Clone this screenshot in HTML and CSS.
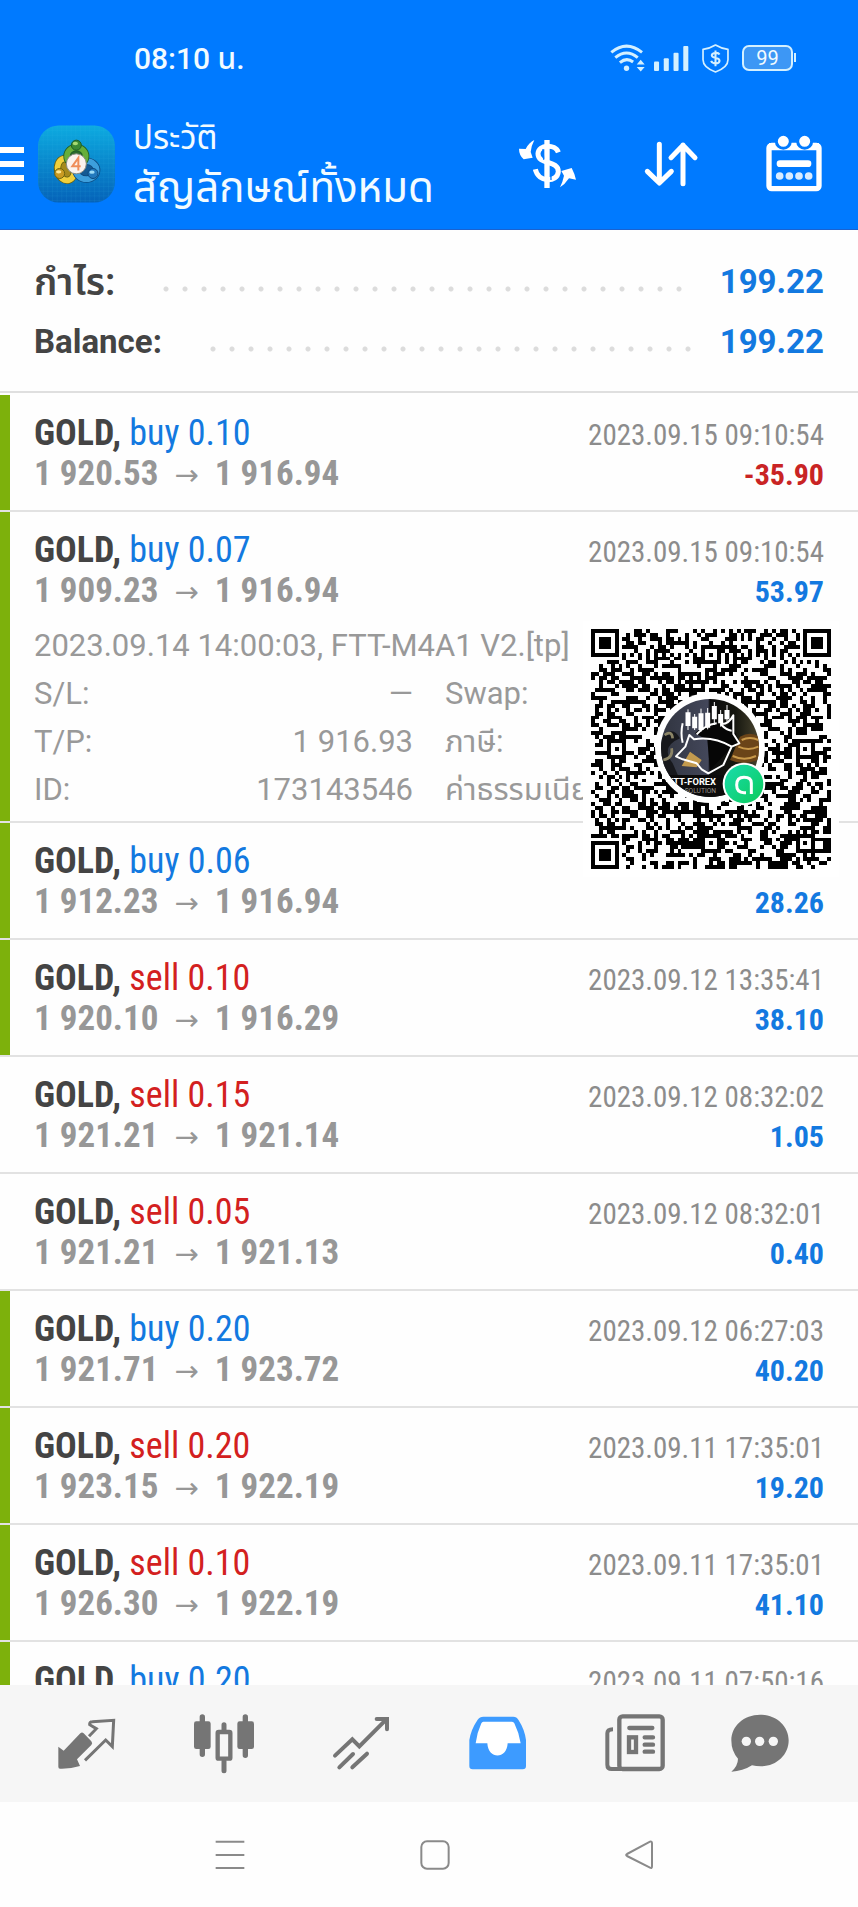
FILE: index.html
```html
<!DOCTYPE html>
<html lang="th">
<head>
    <meta charset="UTF-8">
    <meta name="viewport" content="width=device-width, initial-scale=1.0">
    <title>ประวัติ</title>
    <link rel="stylesheet" href="styles.css">
</head>
<body>
    <header class="header">
        <div class="status-bar">
            <span class="time">08:10 น.</span>
            <div class="status-icons">
                <svg class="wifi" viewBox="0 0 106 84" fill="none" stroke="#d4f0ff" stroke-width="9">
                    <path d="M4 25Q50 -13 97 25"/>
                    <path d="M16 41Q50 13 84 41"/>
                    <path d="M30 56Q50 39 70 54"/>
                    <circle cx="50" cy="73" r="8" fill="#d4f0ff" stroke="none"/>
                    <path d="M81 62l12-15 12 15zM81 69l12 14 12-14z" fill="#d4f0ff" stroke="none"/>
                </svg>
                <svg class="signal" viewBox="0 0 104 74" fill="#d4f0ff">
                    <rect x="0" y="46" width="15" height="28" rx="3"/>
                    <rect x="29" y="36" width="15" height="38" rx="3"/>
                    <rect x="58" y="20" width="15" height="54" rx="3"/>
                    <rect x="87" y="0" width="15" height="74" rx="3"/>
                </svg>
                <svg class="shield" viewBox="0 0 80 86" fill="none" stroke="#d4f0ff" stroke-width="5">
                    <path d="M40 3C53 11 64 14 77 16V47C77 66 60 76 40 83C20 76 3 66 3 47V16C16 14 27 11 40 3z" stroke-linejoin="round"/>
                    <path d="M52 31C48 24 30 25 29 33C29 44 52 38 52 50C51 60 31 60 27 50M40 19V66" stroke-width="6"/>
                </svg>
                <span class="battery">99</span>
            </div>
        </div>
        <div class="toolbar">
            <button class="menu" type="button" aria-label="Menu"><i></i><i></i><i></i></button>
            <svg class="logo" viewBox="0 0 231 231">
                <defs>
                    <linearGradient id="logoBg" x1="0" y1="0" x2="0" y2="1">
                        <stop offset="0" stop-color="#0dabe0"/>
                        <stop offset="1" stop-color="#0562b8"/>
                    </linearGradient>
                    <pattern id="mesh" width="14" height="14" patternUnits="userSpaceOnUse">
                        <path d="M14 0H0V14" fill="none" stroke="#38bdf0" stroke-opacity=".25" stroke-width="2"/>
                    </pattern>
                </defs>
                <rect width="231" height="231" rx="62" fill="url(#logoBg)"/>
                <rect width="231" height="231" rx="62" fill="url(#mesh)"/>
                <ellipse cx="84" cy="132" rx="25" ry="33" transform="rotate(-14 84 132)" fill="#a58a1c" stroke="#6b6310" stroke-width="22"/>
                <ellipse cx="84" cy="132" rx="25" ry="33" transform="rotate(-14 84 132)" fill="none" stroke="#f0cf3c" stroke-width="17"/>
                <ellipse cx="145" cy="134" rx="31" ry="27" fill="#145a94" stroke="#0c4a80" stroke-width="22"/>
                <ellipse cx="145" cy="134" rx="31" ry="27" fill="none" stroke="#3d9fdc" stroke-width="17"/>
                <ellipse cx="115" cy="92" rx="28" ry="26" fill="#2b6b2c" stroke="#1f5d26" stroke-width="22"/>
                <ellipse cx="115" cy="92" rx="28" ry="26" fill="none" stroke="#66ae3a" stroke-width="17"/>
                <circle cx="115" cy="59" r="15" fill="#3b8a35" stroke="#1f5d26" stroke-width="3"/>
                <ellipse cx="112" cy="54" rx="8" ry="5" fill="#a7d973"/>
                <circle cx="65" cy="144" r="15" fill="#c99a22" stroke="#6b6310" stroke-width="3"/>
                <ellipse cx="62" cy="139" rx="8" ry="5" fill="#ffe994"/>
                <circle cx="165" cy="144" r="15" fill="#2379bd" stroke="#0c4a80" stroke-width="3"/>
                <ellipse cx="162" cy="140" rx="8" ry="5" fill="#9ddcf7"/>
                <circle cx="115" cy="115" r="30" fill="#fbf3ee" stroke="#8a8c84" stroke-width="3"/>
                <path d="M121 135V97L103 122H128" fill="none" stroke="#ef8e5a" stroke-width="6"/>
            </svg>
            <div class="titles">
                <p class="subtitle">ประวัติ</p>
                <h1>สัญลักษณ์ทั้งหมด</h1>
            </div>
            <div class="actions">
                <button type="button" aria-label="Currency">
                    <svg class="icon" viewBox="0 0 180 180" fill="none" stroke="#fff" stroke-width="15">
                        <path d="M121 55C112 29 61 31 60 59C60 94 121 77 121 113C118 146 61 147 52 106"/>
                        <path d="M87 18V162" stroke-width="16"/>
                        <path d="M75 45L77 77M98 99L99 138" stroke="#007aff" stroke-width="4"/>
                        <path d="M49 18Q33 25 23 45L3 44Q3 63 17 76L44 71L38 54Q39 37 49 18z" fill="#fff" stroke="none"/>
                        <path d="M126 160Q141 151 153 133L174 137Q170 119 161 102L130 111L138 125Q134 144 126 160z" fill="#fff" stroke="none"/>
                    </svg>
                </button>
                <button type="button" aria-label="Sort">
                    <svg class="icon" viewBox="0 0 180 180" fill="none" stroke="#fff" stroke-width="15" stroke-linecap="round" stroke-linejoin="round">
                        <path d="M55 31V146M19 112L55 147L91 112"/>
                        <path d="M126 149V33M90 71L126 34L162 71"/>
                    </svg>
                </button>
                <button type="button" aria-label="Calendar">
                    <svg class="icon" viewBox="0 0 180 180" fill="none" stroke="#fff">
                        <rect x="15" y="34" width="150" height="130" rx="8" stroke-width="16"/>
                        <path d="M15 38H165" stroke-width="22"/>
                        <circle cx="58" cy="22" r="21" fill="#fff" stroke="#007aff" stroke-width="9"/>
                        <circle cx="122" cy="22" r="21" fill="#fff" stroke="#007aff" stroke-width="9"/>
                        <path d="M48 89H132" stroke-width="20" stroke-linecap="round"/>
                        <path d="M47 126H136" stroke="#d9ecff" stroke-width="23" stroke-linecap="round" stroke-dasharray="0 29"/>
                    </svg>
                </button>
            </div>
        </div>
    </header>

    <main class="history">
        <dl class="summary">
            <div><dt class="thai">กำไร:</dt><dd class="dots"></dd><dd class="sum">199.22</dd></div>
            <div><dt>Balance:</dt><dd class="dots"></dd><dd class="sum">199.22</dd></div>
        </dl>
        <ul class="deals">
            <li class="deal tp">
                <div class="row"><span class="symbol">GOLD, <span class="buy">buy 0.10</span></span><time>2023.09.15 09:10:54</time></div>
                <div class="row"><span class="price">1 920.53 <span class="arrow">→</span> 1 916.94</span><span class="profit loss">-35.90</span></div>
            </li>
            <li class="deal tp open">
                <div class="row"><span class="symbol">GOLD, <span class="buy">buy 0.07</span></span><time>2023.09.15 09:10:54</time></div>
                <div class="row"><span class="price">1 909.23 <span class="arrow">→</span> 1 916.94</span><span class="profit">53.97</span></div>
                <div class="details">
                    <p class="comment">2023.09.14 14:00:03, FTT-M4A1 V2.[tp]</p>
                    <p><span>S/L:</span><span>—</span></p>
                    <p><span>Swap:</span></p>
                    <p><span>T/P:</span><span>1 916.93</span></p>
                    <p><span>ภาษี:</span></p>
                    <p><span>ID:</span><span>173143546</span></p>
                    <p><span>ค่าธรรมเนียม:</span></p>
                </div>
                <div class="qr">
                    <svg viewBox="0 0 61 61" shape-rendering="crispEdges"><path id="qrModules"/></svg>
                    <svg class="avatar" viewBox="-117 -153 720 720">
                        <defs>
                            <clipPath id="face"><circle cx="240" cy="204" r="147"/></clipPath>
                            <linearGradient id="faceBg" x1="0" y1="0" x2="1" y2="0">
                                <stop offset="0" stop-color="#30343f"/>
                                <stop offset=".48" stop-color="#43475a"/>
                                <stop offset=".5" stop-color="#0b0b0c"/>
                                <stop offset=".75" stop-color="#15160f"/>
                                <stop offset="1" stop-color="#4a4530"/>
                            </linearGradient>
                            <linearGradient id="badge" x1="0" y1="0" x2="1" y2="1">
                                <stop offset="0" stop-color="#19dcae"/>
                                <stop offset="1" stop-color="#0ccb5b"/>
                            </linearGradient>
                        </defs>
                        <circle cx="240" cy="204" r="165" fill="#fff"/>
                        <g clip-path="url(#face)">
                            <rect x="90" y="50" width="300" height="310" fill="url(#faceBg)"/>
                            <path d="M92 180Q125 130 150 175Q90 200 128 250L150 300L90 290z" fill="#17181c"/>
                            <path d="M104 165Q125 150 128 175M100 240Q130 235 125 205" fill="none" stroke="#8b8466" stroke-width="8"/>
                            <path d="M180 215L215 240L200 262L155 258z" fill="#c29a4e"/>
                            <path d="M330 170Q365 150 392 175V235Q345 260 300 240z" fill="#6b4418"/>
                            <path d="M335 180q25 -12 50 0M325 200q30 14 60 0M308 228q35 16 70 0" fill="none" stroke="#c9994a" stroke-width="6"/>
                            <rect x="90" y="285" width="300" height="80" fill="#0c0b0b"/>
                            <path d="M195 160Q240 115 290 140L315 105L312 150L330 190L302 205L240 270L232 180z" fill="#060606"/>
                            <path d="M174 88V150M194 102V150M213 86V155M233 84V148M253 66V135M272 90V140M291 75V125" stroke="#fff" stroke-width="3"/>
                            <path d="M174 97V138M194 110V145M213 100V150M233 98V143M253 78V118M272 102V130M291 90V118" stroke="#fff" stroke-width="15"/>
                            <path d="M158 130Q151 160 158 188M178 165L166 200L138 229L158 238L200 250L215 268L235 280L280 255L305 200Q250 168 192 178zM305 200L328 190L310 162V106Q295 135 272 132M272 132Q288 150 305 152M200 163Q225 135 260 130" fill="none" stroke="#fff" stroke-width="6" stroke-linejoin="round"/>
                            <text x="114" y="316" class="face-name">FTT-FOREX</text>
                            <text x="164" y="338" class="face-sub">SOLUTION</text>
                        </g>
                        <circle cx="342" cy="312" r="64" fill="#fff"/>
                        <circle cx="342" cy="312" r="58" fill="url(#badge)"/>
                        <path d="M364 342V309Q364 292 342 292Q320 292 320 315Q320 338 342 338H348" fill="none" stroke="#fff" stroke-width="9"/>
                    </svg>
                </div>
            </li>
            <li class="deal tp">
                <div class="row"><span class="symbol">GOLD, <span class="buy">buy 0.06</span></span></div>
                <div class="row"><span class="price">1 912.23 <span class="arrow">→</span> 1 916.94</span><span class="profit">28.26</span></div>
            </li>
            <li class="deal tp">
                <div class="row"><span class="symbol">GOLD, <span class="sell">sell 0.10</span></span><time>2023.09.12 13:35:41</time></div>
                <div class="row"><span class="price">1 920.10 <span class="arrow">→</span> 1 916.29</span><span class="profit">38.10</span></div>
            </li>
            <li class="deal">
                <div class="row"><span class="symbol">GOLD, <span class="sell">sell 0.15</span></span><time>2023.09.12 08:32:02</time></div>
                <div class="row"><span class="price">1 921.21 <span class="arrow">→</span> 1 921.14</span><span class="profit">1.05</span></div>
            </li>
            <li class="deal">
                <div class="row"><span class="symbol">GOLD, <span class="sell">sell 0.05</span></span><time>2023.09.12 08:32:01</time></div>
                <div class="row"><span class="price">1 921.21 <span class="arrow">→</span> 1 921.13</span><span class="profit">0.40</span></div>
            </li>
            <li class="deal tp">
                <div class="row"><span class="symbol">GOLD, <span class="buy">buy 0.20</span></span><time>2023.09.12 06:27:03</time></div>
                <div class="row"><span class="price">1 921.71 <span class="arrow">→</span> 1 923.72</span><span class="profit">40.20</span></div>
            </li>
            <li class="deal tp">
                <div class="row"><span class="symbol">GOLD, <span class="sell">sell 0.20</span></span><time>2023.09.11 17:35:01</time></div>
                <div class="row"><span class="price">1 923.15 <span class="arrow">→</span> 1 922.19</span><span class="profit">19.20</span></div>
            </li>
            <li class="deal tp">
                <div class="row"><span class="symbol">GOLD, <span class="sell">sell 0.10</span></span><time>2023.09.11 17:35:01</time></div>
                <div class="row"><span class="price">1 926.30 <span class="arrow">→</span> 1 922.19</span><span class="profit">41.10</span></div>
            </li>
            <li class="deal tp">
                <div class="row"><span class="symbol">GOLD, <span class="buy">buy 0.20</span></span><time>2023.09.11 07:50:16</time></div>
            </li>
        </ul>
    </main>

    <nav class="tabs">
        <button type="button" aria-label="Quotes">
            <svg class="icon" viewBox="0 0 180 180" fill="none" stroke="#757575" stroke-width="9">
                <path d="M4 98L20 110L70 58Q75 53 80 58L103 82Q108 88 103 93L60 136L69 156Q40 165 9 164Q4 164 4 158z" fill="#757575" stroke="none"/>
                <path d="M96 67L118 44L98 32Q97 23 106 23L170 19L166 98L146 78L84 139" stroke-linejoin="miter"/>
            </svg>
        </button>
        <button type="button" aria-label="Chart">
            <svg class="icon" viewBox="0 0 180 180" fill="none" stroke="#757575">
                <path d="M25 9V121M154 9V124" stroke-width="16" stroke-linecap="round"/>
                <rect x="0" y="22" width="50" height="83" rx="7" fill="#757575" stroke="none"/>
                <rect x="130" y="22" width="50" height="83" rx="7" fill="#757575" stroke="none"/>
                <path d="M90 32V50M90 142V170" stroke-width="15" stroke-linecap="round"/>
                <rect x="71" y="54" width="38" height="80" stroke-width="13" rx="3"/>
            </svg>
        </button>
        <button type="button" aria-label="Trade">
            <svg class="icon" viewBox="0 0 180 180" fill="none" stroke="#757575" stroke-width="12" stroke-linecap="round">
                <path d="M12 125L64 76L85 97L166 16"/>
                <path d="M137 15H168V46"/>
                <path d="M25 160L66 120M64 160L108 119"/>
            </svg>
        </button>
        <button type="button" aria-label="History">
            <svg class="icon" viewBox="0 0 180 180">
                <path d="M46 8H136Q146 8 151 17Q170 46 174 78V156Q174 166 164 166H14Q4 166 4 156V78Q9 46 29 17Q35 8 46 8z" fill="#3d9bff"/>
                <path d="M46 23H132Q137 23 139 28Q153 56 158 88H119C117 137 60 137 58 88H23Q27 56 40 28Q42 23 46 23z" fill="#fff"/>
            </svg>
        </button>
        <button type="button" aria-label="News">
            <svg class="icon" viewBox="0 0 180 180" fill="none" stroke="#757575">
                <rect x="43" y="7" width="130" height="158" rx="10" stroke-width="13"/>
                <path d="M24 46Q7 46 7 58V152Q7 165 20 165H50" stroke-width="12"/>
                <path d="M73 42H142M119 70H144M119 92H144M119 113H144" stroke-width="13" stroke-linecap="round"/>
                <rect x="72" y="70" width="21" height="44" stroke-width="13"/>
            </svg>
        </button>
        <button type="button" aria-label="Chat">
            <svg class="icon" viewBox="0 0 180 180" fill="#757575">
                <path d="M90 2C139 2 176 36 176 79C176 123 139 157 93 157Q78 157 66 154Q38 172 4 173Q24 155 24 134Q4 112 4 79C4 36 42 2 90 2z"/>
                <circle cx="49" cy="82" r="14" fill="#f6f6f6"/>
                <circle cx="89" cy="82" r="14" fill="#f6f6f6"/>
                <circle cx="130" cy="82" r="14" fill="#f6f6f6"/>
            </svg>
        </button>
    </nav>

    <nav class="system-nav">
        <button type="button" aria-label="Recent">
            <svg viewBox="0 0 90 90" fill="none" stroke="#8a8a8a" stroke-width="6"><path d="M2 5H88M2 45H88M2 84H88"/></svg>
        </button>
        <button type="button" aria-label="Home">
            <svg viewBox="0 0 90 90" fill="none" stroke="#8a8a8a" stroke-width="6"><rect x="4" y="4" width="82" height="82" rx="17"/></svg>
        </button>
        <button type="button" aria-label="Back">
            <svg viewBox="0 0 90 90" fill="none" stroke="#8a8a8a" stroke-width="6"><path d="M6 42L75 5Q81 3 81 10V79Q81 86 75 83L6 48Q1 45 6 42z"/></svg>
        </button>
    </nav>
    <script src="qr.js"></script>
</body>
</html>
```
FILE: styles.css
```css
* {
    margin: 0;
    padding: 0;
    box-sizing: border-box;
}

body {
    display: flex;
    flex-direction: column;
    height: 100vh;
    overflow: hidden;
    font-family: Roboto, "Noto Sans Thai", "Noto Sans", sans-serif;
    font-size: 31px;
    color: #444;
    background-color: #fefefe;
}

button {
    display: flex;
    justify-content: center;
    align-items: center;
    border: none;
    background: none;
    cursor: pointer;
}

svg {
    display: block;
}

.icon {
    width: 60px;
    height: 60px;
}

/* header */
.header {
    flex: none;
    background-color: #007aff;
    border-bottom: 1px solid #1b62cf;
    color: #f2fbff;
}

.status-bar {
    display: flex;
    justify-content: space-between;
    align-items: center;
    height: 80px;
    padding: 36px 60px 0 134px;
}

.time {
    padding-top: 4px;
    font-size: 30px;
    font-weight: 500;
}

.status-icons {
    display: flex;
    align-items: center;
    gap: 13px;
}

.wifi {
    width: 35px;
    height: 28px;
    margin-right: -4px;
}

.signal {
    width: 35px;
    height: 25px;
}

.shield {
    width: 27px;
    height: 29px;
}

.battery {
    position: relative;
    width: 51px;
    height: 26px;
    margin-right: 5px;
    border: 2px solid #d4f0ff;
    border-radius: 7px;
    background-color: #3d97f5;
    font-size: 20px;
    line-height: 22px;
    text-align: center;
}

.battery::after {
    content: "";
    position: absolute;
    top: 6px;
    right: -5px;
    width: 2px;
    height: 9px;
    background-color: #d4f0ff;
}

.toolbar {
    display: flex;
    align-items: center;
    height: 149px;
    padding: 19px 34px 0 0;
}

.menu {
    flex-direction: column;
    gap: 8px;
    width: 24px;
}

.menu i {
    width: 24px;
    height: 6px;
    background-color: #fff;
}

.logo {
    width: 77px;
    height: 78px;
    margin: 0 18px 0 14px;
}

.titles {
    flex: 1;
    padding-top: 4px;
}

.subtitle {
    font-size: 33px;
    line-height: 44px;
}

h1 {
    font-size: 42px;
    font-weight: 400;
    line-height: 56px;
    white-space: nowrap;
}

.actions {
    display: flex;
    gap: 63px;
}

/* totals */
.history {
    flex: 1;
    min-height: 0;
    overflow: hidden;
}

.summary {
    padding: 22px 34px 19px;
    border-bottom: 2px solid #dfdfdf;
    font-size: 33px;
    font-weight: 700;
    line-height: 60px;
}

.summary div {
    display: flex;
    height: 60px;
}

.thai {
    font-size: 38px;
    font-weight: 600;
}

.dots {
    flex: 1;
    margin: 0 28px 0 41px;
    background: radial-gradient(circle at 10px 37px, #dcdcdc 2px, transparent 3px) 0 0 / 19px 60px repeat-x;
}

.sum {
    color: #1379e0;
}

/* deals */
.deals {
    padding-top: 2px;
    list-style: none;
}

.deal {
    position: relative;
    min-height: 117px;
    padding: 18px 34px 16px;
    border-bottom: 2px solid #e2e2e2;
}

/* green mark of a deal closed by take profit */
.tp::before {
    content: "";
    position: absolute;
    top: 0;
    bottom: 0;
    left: 0;
    width: 10px;
    background-color: #7db10c;
}

.open {
    padding-bottom: 7px;
}

.row {
    display: flex;
    justify-content: space-between;
    align-items: baseline;
    height: 40px;
    font-family: "Roboto Condensed", "Liberation Sans Narrow", Roboto, sans-serif;
    line-height: 40px;
    white-space: nowrap;
}

.row + .row {
    margin-top: 1px;
}

.symbol {
    font-size: 36px;
    font-weight: 700;
}

.price {
    font-size: 35px;
    font-weight: 700;
    color: #979797;
}

.arrow {
    margin: 0 8px;
    font-family: "DejaVu Sans", sans-serif;
    font-size: 29px;
    font-weight: 400;
}

.buy,
.sell {
    font-weight: 400;
    color: #1379e0;
}

.sell {
    color: #d32020;
}

time {
    font-size: 29px;
    color: #8c8c8c;
}

.profit {
    font-size: 30px;
    font-weight: 700;
    color: #1379e0;
}

.loss {
    color: #c92424;
}

.details {
    display: grid;
    grid-template-columns: 1fr 1fr;
    column-gap: 32px;
    padding-top: 11px;
    line-height: 48px;
    color: #999;
    white-space: nowrap;
}

.details p {
    display: flex;
    justify-content: space-between;
    height: 48px;
}

.details .comment {
    grid-column: 1 / 3;
}

.qr {
    position: absolute;
    z-index: 1;
    top: 109px;
    right: 19px;
    width: 256px;
    padding: 8px;
    background-color: #fff;
}

.avatar {
    position: absolute;
    top: 8px;
    left: 8px;
    width: 240px;
    height: 240px;
}

.face-name {
    font-size: 28px;
    font-weight: 700;
    fill: #fff;
}

.face-sub {
    font-size: 20px;
    fill: #9a958c;
}

/* bottom bars */
.tabs {
    flex: none;
    display: grid;
    grid-template-columns: repeat(5, 137fr) 114fr;
    height: 117px;
    padding: 0 41px 0 18px;
    background-color: #f6f6f6;
}

.system-nav {
    flex: none;
    display: flex;
    justify-content: center;
    gap: 175px;
    height: 105px;
    padding-left: 12px;
}

.system-nav svg {
    width: 30px;
    height: 30px;
}
```
FILE: qr.js
```js
const size = 61;
const finders = [[0, 0], [size - 7, 0], [0, size - 7]];
const aligns = [[30, 6], [6, 30], [30, 30], [54, 30], [30, 54], [54, 54]];

let seed = 20230915;
function nextBit() {
    seed = (seed * 1103515245 + 12345) % 2147483648;
    return (seed >> 16) & 1;
}

function isDark(x, y) {
    const noise = nextBit();
    for (const [fx, fy] of finders) {
        const d = Math.max(Math.abs(x - fx - 3), Math.abs(y - fy - 3));
        if (d <= 4) return d !== 2 && d !== 4;
    }
    for (const [ax, ay] of aligns) {
        const d = Math.max(Math.abs(x - ax), Math.abs(y - ay));
        if (d <= 2) return d !== 1;
    }
    // timing lines
    if (y === 6) return x % 2 === 0;
    if (x === 6) return y % 2 === 0;
    return noise === 1;
}

let path = '';
for (let y = 0; y < size; y++) {
    for (let x = 0; x < size; x++) {
        if (isDark(x, y)) path += `M${x} ${y}h1v1h-1z`;
    }
}
document.getElementById('qrModules').setAttribute('d', path);
```
